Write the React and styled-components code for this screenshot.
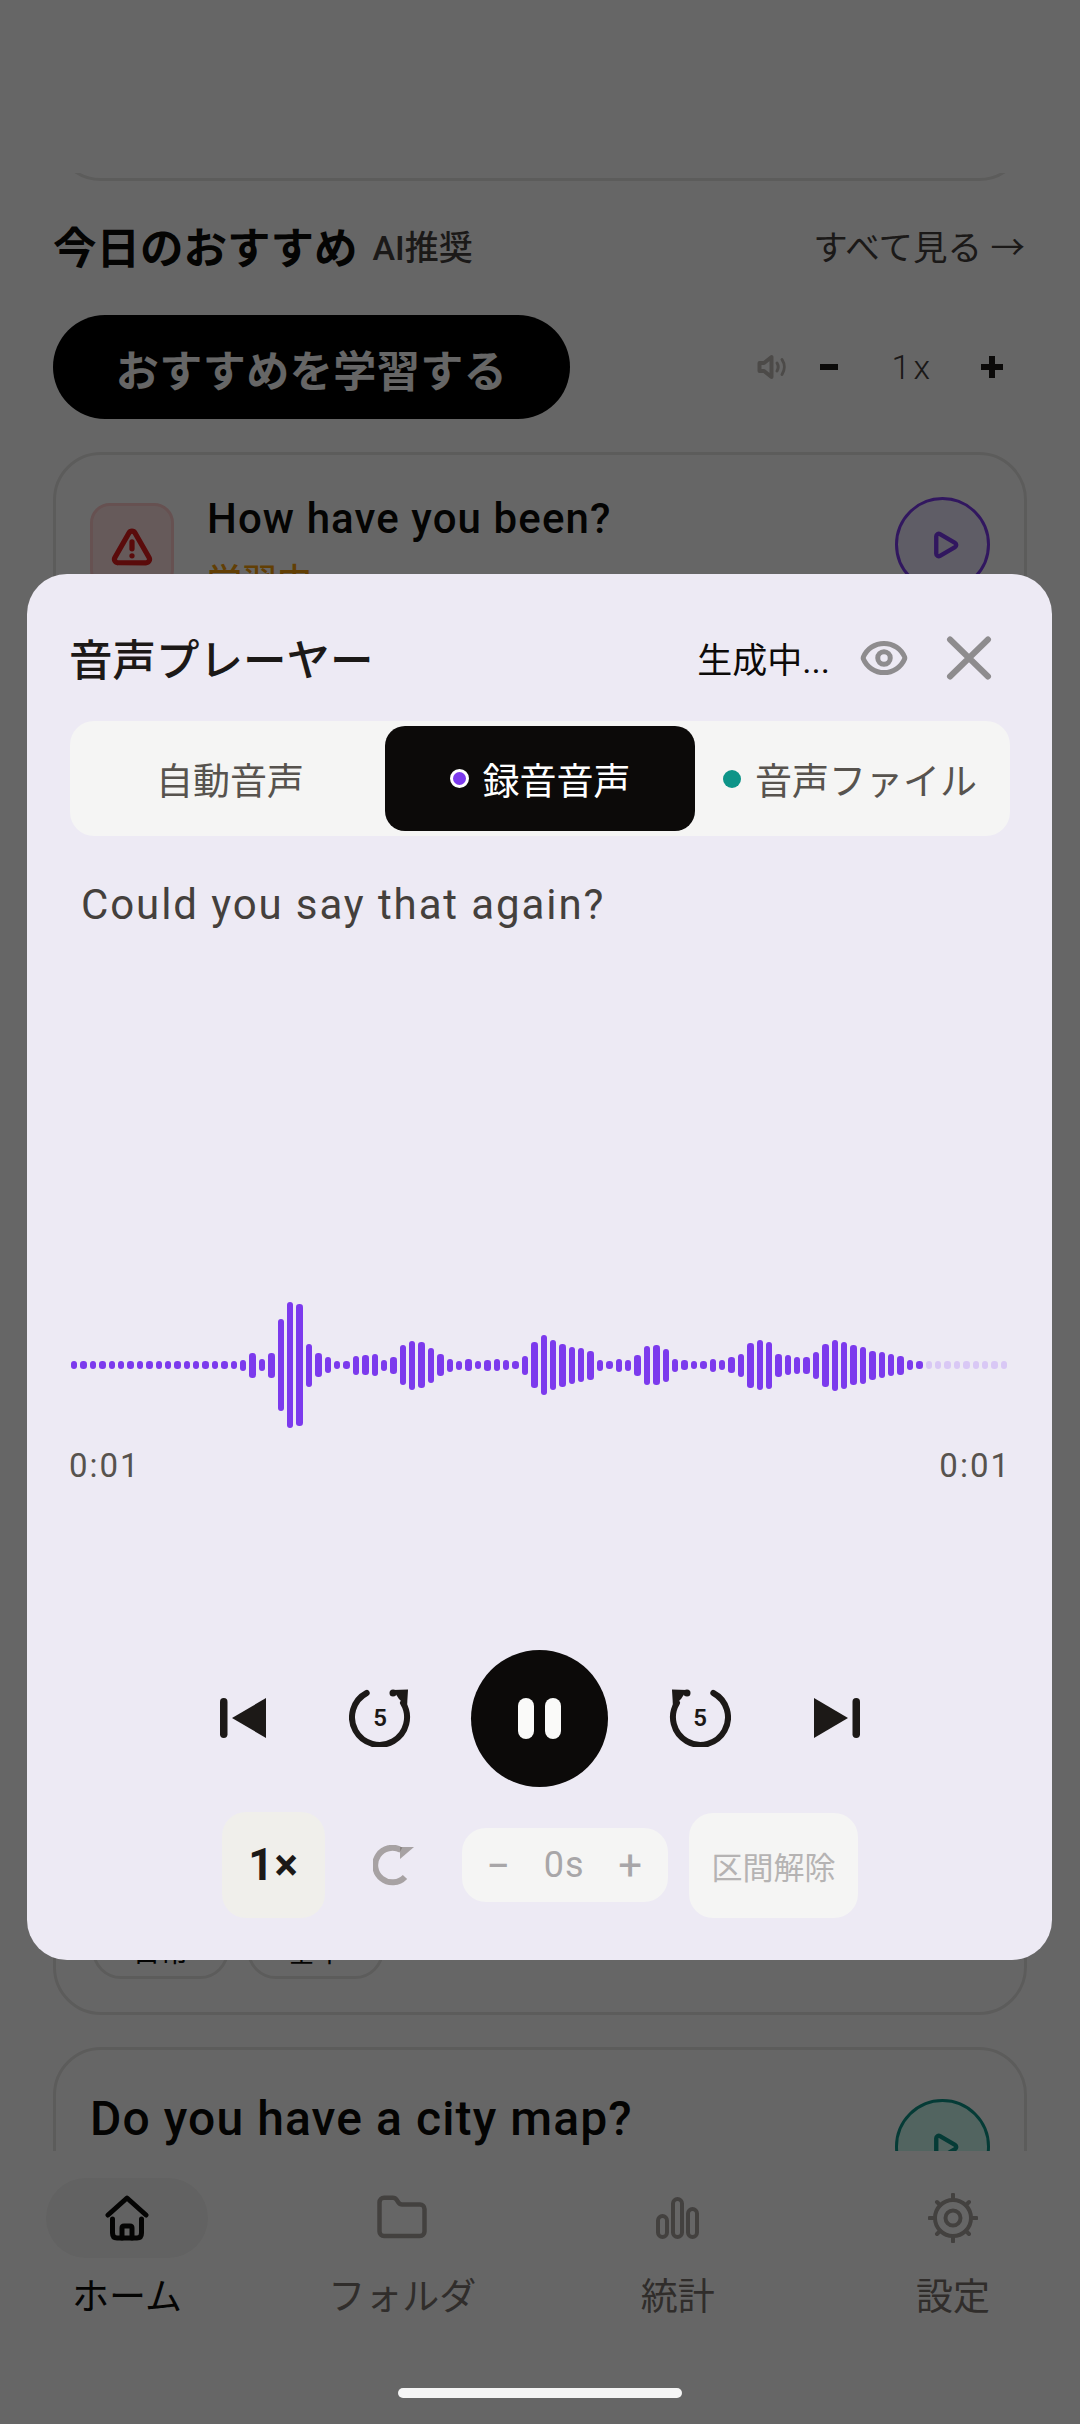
import React from 'react';
import styled, { createGlobalStyle } from 'styled-components';
import { Folder, Eye, TriangleAlert, Play } from 'lucide-react';

const GlobalStyle = createGlobalStyle`
    html, body {
        margin: 0;
        padding: 0;
        background: #fff;
    }
    * {
        box-sizing: border-box;
    }
    body {
        font-family: Roboto, "Noto Sans CJK JP", sans-serif;
        color: #0c0a09;
    }
`;

const Screen = styled.div`
    position: relative;
    width: 1080px;
    height: 2424px;
    overflow: hidden;
    background: #fff;
    display: flex;
    flex-direction: column;
`;

const Content = styled.main`
    height: 2151px;
    flex: none;
    overflow: hidden;
    padding: 173px 53px 0;
    display: flex;
    flex-direction: column;
`;

// only the last few pixels of the card above stay visible under the header
const CardEdge = styled.div`
    height: 8px;
    flex: none;
    overflow: hidden;
    display: flex;
    align-items: flex-end;
`;

const CardEdgeBody = styled.div`
    flex: 1;
    height: 100px;
    flex-shrink: 0;
    border: 3px solid #e7e5e4;
    border-radius: 48px;
`;

const SectionHead = styled.div`
    display: flex;
    align-items: center;
    justify-content: space-between;
    margin-top: 34px;
    height: 60px;
    flex: none;
`;

const SectionTitle = styled.div`
    display: flex;
    align-items: center;
    gap: 15px;
`;

const Heading = styled.h2`
    margin: 0;
    font-size: 43.5px;
    font-weight: 700;
`;

const HeadingNote = styled.span`
    font-size: 34px;
    font-weight: 500;
    color: #44403c;
`;

const SeeAll = styled.span`
    font-size: 34.5px;
    color: #44403c;
    margin-right: 2px;
`;

const ActionRow = styled.div`
    display: flex;
    align-items: center;
    justify-content: space-between;
    margin-top: 40px;
    flex: none;
`;

const PrimaryButton = styled.div`
    width: 517px;
    height: 104px;
    padding-top: 2px;
    border-radius: 52px;
    background: #000;
    color: #fff;
    font-size: 43px;
    font-weight: 700;
    letter-spacing: 0.5px;
    display: flex;
    align-items: center;
    justify-content: center;
`;

const RateControl = styled.div`
    display: flex;
    align-items: center;
    margin-right: 24px;
    color: #44403c;
`;

const RateSign = styled.span`
    width: 22px;
    height: 22px;
    display: flex;
    align-items: center;
    justify-content: center;
    color: #1c1917;
    margin-left: ${p => p.$gap}px;
`;

const RateValue = styled.span`
    font-size: 34px;
    font-weight: 300;
    letter-spacing: 3px;
    margin-left: 52px;
`;

const WordCard = styled.section`
    flex: none;
    height: ${p => p.$height}px;
    margin-top: ${p => p.$top}px;
    padding: 0 34px 33px 34px;
    border: 3px solid #e7e5e4;
    border-radius: 48px;
    display: flex;
    flex-direction: column;
    justify-content: space-between;
`;

const WordRow = styled.div`
    display: flex;
    justify-content: space-between;
    align-items: flex-start;
`;

const WordInfo = styled.div`
    display: flex;
    gap: 33px;
    padding-top: ${p => p.$top}px;
`;

const AlertBox = styled.div`
    width: 84px;
    height: 87px;
    margin-top: 8px;
    border-radius: 20px;
    border: 3px solid #fecaca;
    background: #fee2e2;
    display: flex;
    align-items: center;
    justify-content: center;
    color: #e11d1d;
`;

const WordTitle = styled.div`
    font-size: ${p => p.$size}px;
    font-weight: 500;
    line-height: 48px;
    letter-spacing: 1.1px;
    white-space: nowrap;
`;

const WordStatus = styled.div`
    font-size: 35px;
    font-weight: 500;
    color: #f59e0b;
    margin-top: 10px;
`;

const PlayRing = styled.div`
    width: 95px;
    height: 95px;
    margin-top: ${p => p.$top}px;
    padding-left: 5px;
    border-radius: 50%;
    border: 3px solid ${p => p.$color};
    background: ${p => p.$fill};
    color: ${p => p.$color};
    display: flex;
    align-items: center;
    justify-content: center;
`;

const Chips = styled.div`
    display: flex;
    gap: 18px;
    margin-left: 2px;
`;

const Chip = styled.div`
    height: 58px;
    width: ${p => p.$width}px;
    border: 3px solid #e7e5e4;
    border-radius: 29px;
    font-size: 28px;
    display: flex;
    align-items: center;
    justify-content: center;
`;

const BottomNav = styled.nav`
    height: 273px;
    flex: none;
    background: #fff;
    padding: 27px 46px 0;
    display: flex;
    justify-content: space-between;
    align-items: flex-start;
`;

const NavItem = styled.div`
    width: 162px;
    display: flex;
    flex-direction: column;
    align-items: center;
    color: ${p => (p.$active ? '#0c0a09' : '#a8a29e')};
`;

const NavIconWrap = styled.div`
    width: 162px;
    height: 80px;
    border-radius: 40px;
    background: ${p => (p.$active ? '#f5f5f4' : 'transparent')};
    display: flex;
    align-items: center;
    justify-content: center;
`;

const NavLabel = styled.span`
    margin-top: 14px;
    font-size: 37px;
    line-height: 52px;
    white-space: nowrap;
    color: ${p => (p.$active ? '#0c0a09' : '#78716c')};
`;

const HomeBar = styled.div`
    position: absolute;
    left: 398px;
    top: 2388px;
    width: 284px;
    height: 10px;
    border-radius: 5px;
    background: #f5f5f5;
    z-index: 3;
`;

const Scrim = styled.div`
    position: absolute;
    inset: 0;
    background: rgba(0, 0, 0, 0.6);
    z-index: 1;
`;

const Sheet = styled.div`
    position: absolute;
    left: 27px;
    top: 574px;
    width: 1025px;
    height: 1386px;
    border-radius: 40px;
    background: #edeaf4;
    z-index: 2;
    padding: 0 43px;
    display: flex;
    flex-direction: column;
`;

const SheetHead = styled.header`
    height: 147px;
    flex: none;
    display: flex;
    align-items: center;
    justify-content: space-between;
    padding-top: 20px;
`;

const SheetTitle = styled.h1`
    margin: 0;
    margin-left: -1px;
    font-size: 43.5px;
    font-weight: 500;
    color: #1c1917;
`;

const HeadActions = styled.div`
    display: flex;
    align-items: center;
`;

const GenStatus = styled.span`
    font-size: 35px;
    color: #0c0a09;
`;

const EyeButton = styled.span`
    display: flex;
    margin-left: 29px;
    color: #8e8c8e;
`;

const CloseButton = styled.span`
    display: flex;
    margin-left: 37px;
    margin-right: 17px;
    color: #8e8c8e;
`;

const Tabs = styled.div`
    flex: none;
    height: 115px;
    margin-right: -1px;
    padding: 5px;
    border-radius: 24px;
    background: #f5f5f4;
    display: grid;
    grid-template-columns: repeat(3, 1fr);
`;

const Tab = styled.div`
    border-radius: 20px;
    background: ${p => (p.$active ? '#0c0a09' : 'transparent')};
    color: ${p => (p.$active ? '#fff' : '#57534e')};
    font-size: 37px;
    display: flex;
    align-items: center;
    justify-content: center;
    gap: 14px;
`;

const TabDot = styled.span`
    width: ${p => (p.$ring ? 19 : 18)}px;
    height: ${p => (p.$ring ? 19 : 18)}px;
    border-radius: 50%;
    background: ${p => p.$color};
    border: ${p => (p.$ring ? '3px solid #fff' : 'none')};
`;

const Sentence = styled.p`
    margin: 41px 0 0 11px;
    flex: none;
    height: 56px;
    font-size: 42px;
    line-height: 56px;
    letter-spacing: 1.9px;
    white-space: nowrap;
    color: #44403c;
`;

const Wave = styled.div`
    flex: none;
    margin-top: 367px;
    height: 130px;
    padding-left: 1px;
    margin-right: 1px;
    display: flex;
    align-items: center;
    justify-content: space-between;
`;

const WaveBar = styled.span`
    width: 6.4px;
    border-radius: 3.2px;
    background: ${p => (p.$played ? '#7c3aed' : '#d9c8f5')};
`;

const TimeRow = styled.div`
    flex: none;
    margin: 14px -2px 0 -1px;
    display: flex;
    justify-content: space-between;
    font-size: 33px;
    line-height: 44px;
    letter-spacing: 2px;
    color: #57534e;
`;

const Transport = styled.div`
    flex: none;
    margin-top: 162px;
    height: 136px;
    display: flex;
    align-items: center;
    justify-content: center;
`;

const TransportIcon = styled.span`
    display: flex;
    margin-left: ${p => p.$left || 0}px;
    color: #1c1917;
`;

const PauseButton = styled.div`
    width: 137px;
    height: 137px;
    margin-left: ${p => p.$left}px;
    border-radius: 50%;
    background: #0c0a09;
    display: flex;
    align-items: center;
    justify-content: center;
    gap: 11px;
`;

const PauseBar = styled.span`
    width: 16px;
    height: 41px;
    border-radius: 8px;
    background: #fafaf9;
`;

const ToolRow = styled.div`
    flex: none;
    margin-top: 26px;
    padding-left: 152px;
    display: flex;
    align-items: center;
`;

const SpeedButton = styled.div`
    width: 103px;
    height: 106px;
    border-radius: 24px;
    background: #f0efeb;
    color: #1c1917;
    font-size: 44px;
    font-weight: 700;
    letter-spacing: 1px;
    display: flex;
    align-items: center;
    justify-content: center;
`;

const LoopIcon = styled.span`
    display: flex;
    margin-left: 48px;
    color: #78716c;
`;

const Stepper = styled.div`
    width: 206px;
    height: 74px;
    margin-left: 47px;
    padding: 0 26px 0 24px;
    border-radius: 24px;
    background: #f5f5f4;
    color: #a8a6a8;
    font-size: 36px;
    letter-spacing: 1px;
    display: flex;
    align-items: center;
    justify-content: space-between;
`;

const StepSign = styled.span`
    font-size: 42px;
    letter-spacing: 0;
`;

const ClearButton = styled.div`
    width: 169px;
    height: 105px;
    margin-left: 21px;
    border-radius: 24px;
    background: #f5f5f4;
    color: #b5b3b3;
    font-size: 31px;
    display: flex;
    align-items: center;
    justify-content: center;
`;

// heights read off the reference, first 91 bars are played
const WAVE = [
    8, 8, 8, 8, 8, 8, 8, 8, 8, 8, 8, 8, 8, 8, 8, 8, 8, 8, 11, 25, 12, 25, 92, 126, 122, 43, 24, 16, 8, 8,
    19, 20, 22, 11, 17, 40, 49, 46, 35, 22, 13, 9, 12, 8, 11, 12, 10, 8, 19, 46, 60, 50, 43, 37, 34, 29,
    11, 8, 13, 11, 21, 39, 40, 33, 13, 10, 8, 8, 13, 10, 16, 23, 45, 50, 47, 23, 20, 17, 17, 27, 43, 51,
    47, 40, 37, 29, 26, 22, 19, 10, 8, 8, 8, 8, 8, 8, 8, 8, 8, 8,
];
const PLAYED = 91;

const ReplayFive = ({ flip }) => (
    <svg width="62" height="58" viewBox="0 0 62 58" fill="none">
        <g transform={flip ? 'translate(62 0) scale(-1 1)' : undefined}>
            <path d="M17.7 4 A27.5 27.5 0 1 0 54 14" stroke="currentColor" strokeWidth="6" strokeLinecap="round" />
            <circle cx="44" cy="4" r="3.5" fill="currentColor" />
            <path d="M44 1 L59 0.5 L58 18 L50 10 Z" fill="currentColor" />
        </g>
        <text x="31" y="37" textAnchor="middle" fontFamily="Roboto, sans-serif" fontWeight="600" fontSize="24" fill="currentColor">5</text>
    </svg>
);

const SkipIcon = ({ next }) => (
    <svg width="46" height="40" viewBox="0 0 46 40" fill="none">
        <g transform={next ? 'translate(46 0) scale(-1 1)' : undefined}>
            <rect x="0" y="0" width="7.5" height="40" rx="3.7" fill="currentColor" />
            <path d="M12 20 L46 0 V40 Z" fill="currentColor" />
        </g>
    </svg>
);

const LoopGlyph = () => (
    <svg width="42" height="41" viewBox="0 0 42 41" fill="none">
        <path d="M28 5 A17.3 17.3 0 1 0 32 32" stroke="currentColor" strokeOpacity="0.6" strokeWidth="6" />
        <path d="M27 2 H41 L27 14 Z" fill="currentColor" fillOpacity="0.6" />
    </svg>
);

const CloseGlyph = () => (
    <svg width="46" height="44" viewBox="0 0 46 44" fill="none" stroke="currentColor" strokeWidth="6" strokeLinecap="round">
        <path d="M4 3.5 L42 40.5 M42 3.5 L4 40.5" />
    </svg>
);

const SpeakerIcon = () => (
    <svg width="30" height="26" viewBox="0 0 30 26" fill="none" stroke="#bdb9b5" strokeLinejoin="round" strokeLinecap="round">
        <path d="M2.5 9 H7 L14.5 3 V23 L7 17 H2.5 Z" strokeWidth="4" />
        <path d="M20 9 C21.5 11.5 21.5 14.5 20 17" strokeWidth="3" />
        <path d="M25 5.5 C28 10 28 16 25 20.5" strokeWidth="3" />
    </svg>
);

const HomeIcon = () => (
    <svg width="44" height="46" viewBox="0 0 44 46" fill="none" stroke="currentColor" strokeWidth="5" strokeLinejoin="round" strokeLinecap="round">
        <path d="M3 20 L22 3 L41 20" />
        <path d="M7.5 24 V38 C7.5 41 9 43 12 43 H32 C35 43 36.5 41 36.5 38 V24" />
        <path d="M17 43 V33 C17 32 17.5 31 19 31 H25 C26.5 31 27 32 27 33 V43" />
    </svg>
);

const StatsIcon = () => (
    <svg width="44" height="42" viewBox="0 0 44 42" fill="none" stroke="currentColor" strokeWidth="4">
        <rect x="2" y="19" width="9" height="21" rx="4.5" />
        <rect x="17" y="2" width="9" height="38" rx="4.5" />
        <rect x="32" y="12" width="9" height="28" rx="4.5" />
    </svg>
);

const GearIcon = () => (
    <svg width="50" height="50" viewBox="0 0 50 50" fill="none" stroke="currentColor" strokeWidth="4" strokeLinecap="round">
        <circle cx="25" cy="25" r="18" />
        <circle cx="25" cy="25" r="7.5" />
        <path d="M25 1.5 V7 M25 43 V48.5 M1.5 25 H7 M43 25 H48.5 M9 9 L12 12 M38 38 L41 41 M41 9 L38 12 M12 38 L9 41" />
    </svg>
);

const MinusSign = () => (
    <svg width="18" height="6" viewBox="0 0 18 6"><rect width="18" height="6" fill="currentColor" /></svg>
);

const PlusSign = () => (
    <svg width="22" height="22" viewBox="0 0 22 22"><path d="M8 0 H14 V8 H22 V14 H14 V22 H8 V14 H0 V8 H8 Z" fill="currentColor" /></svg>
);

export default function App() {
    return (
        <Screen>
            <GlobalStyle />
            <Content>
                <CardEdge><CardEdgeBody /></CardEdge>
                <SectionHead>
                    <SectionTitle>
                        <Heading>今日のおすすめ</Heading>
                        <HeadingNote>AI推奨</HeadingNote>
                    </SectionTitle>
                    <SeeAll>すべて見る →</SeeAll>
                </SectionHead>
                <ActionRow>
                    <PrimaryButton>おすすめを学習する</PrimaryButton>
                    <RateControl>
                        <SpeakerIcon />
                        <RateSign $gap={31}><MinusSign /></RateSign>
                        <RateValue>1x</RateValue>
                        <RateSign $gap={48}><PlusSign /></RateSign>
                    </RateControl>
                </ActionRow>
                <WordCard $top={33} $height={1563}>
                    <WordRow>
                        <WordInfo $top={40}>
                            <AlertBox><TriangleAlert size={42} strokeWidth={3} /></AlertBox>
                            <div>
                                <WordTitle $size={42}>How have you been?</WordTitle>
                                <WordStatus>学習中</WordStatus>
                            </div>
                        </WordInfo>
                        <PlayRing $top={42} $color="#7c3aed" $fill="#ede9fe"><Play size={30} strokeWidth={3.5} /></PlayRing>
                    </WordRow>
                    <Chips>
                        <Chip $width={137}>日常</Chip>
                        <Chip $width={137}>基本</Chip>
                    </Chips>
                </WordCard>
                <WordCard $top={32} $height={200}>
                    <WordRow>
                        <WordInfo $top={45}>
                            <WordTitle $size={48}>Do you have a city map?</WordTitle>
                        </WordInfo>
                        <PlayRing $top={49} $color="#0d9488" $fill="#ccfbf1"><Play size={30} strokeWidth={3.5} /></PlayRing>
                    </WordRow>
                </WordCard>
            </Content>
            <BottomNav>
                <NavItem $active>
                    <NavIconWrap $active><HomeIcon /></NavIconWrap>
                    <NavLabel $active>ホーム</NavLabel>
                </NavItem>
                <NavItem>
                    <NavIconWrap><Folder size={54} strokeWidth={2} /></NavIconWrap>
                    <NavLabel>フォルダ</NavLabel>
                </NavItem>
                <NavItem>
                    <NavIconWrap><StatsIcon /></NavIconWrap>
                    <NavLabel>統計</NavLabel>
                </NavItem>
                <NavItem>
                    <NavIconWrap><GearIcon /></NavIconWrap>
                    <NavLabel>設定</NavLabel>
                </NavItem>
            </BottomNav>
            <Scrim />
            <HomeBar />
            <Sheet>
                <SheetHead>
                    <SheetTitle>音声プレーヤー</SheetTitle>
                    <HeadActions>
                        <GenStatus>生成中...</GenStatus>
                        <EyeButton><Eye size={50} strokeWidth={2.4} /></EyeButton>
                        <CloseButton><CloseGlyph /></CloseButton>
                    </HeadActions>
                </SheetHead>
                <Tabs>
                    <Tab>自動音声</Tab>
                    <Tab $active><TabDot $ring $color="#7c3aed" />録音音声</Tab>
                    <Tab><TabDot $color="#0d9488" />音声ファイル</Tab>
                </Tabs>
                <Sentence>Could you say that again?</Sentence>
                <Wave>
                    {WAVE.map((h, i) => (
                        <WaveBar key={i} $played={i < PLAYED} style={{ height: h }} />
                    ))}
                </Wave>
                <TimeRow>
                    <span>0:01</span>
                    <span>0:01</span>
                </TimeRow>
                <Transport>
                    <TransportIcon><SkipIcon /></TransportIcon>
                    <TransportIcon $left={83}><ReplayFive /></TransportIcon>
                    <PauseButton $left={60} aria-label="pause"><PauseBar /><PauseBar /></PauseButton>
                    <TransportIcon $left={61}><ReplayFive flip /></TransportIcon>
                    <TransportIcon $left={83}><SkipIcon next /></TransportIcon>
                </Transport>
                <ToolRow>
                    <SpeedButton>1×</SpeedButton>
                    <LoopIcon><LoopGlyph /></LoopIcon>
                    <Stepper><StepSign>−</StepSign><span>0s</span><StepSign>+</StepSign></Stepper>
                    <ClearButton>区間解除</ClearButton>
                </ToolRow>
            </Sheet>
        </Screen>
    );
}
